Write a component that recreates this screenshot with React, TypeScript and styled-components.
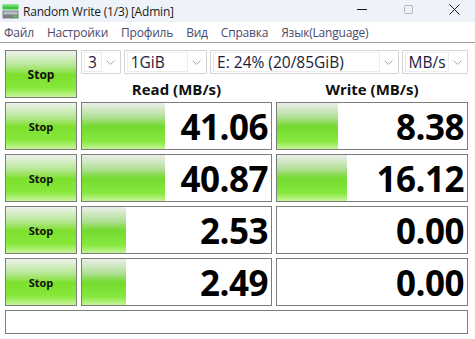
import React from 'react';
import styled, {createGlobalStyle} from 'styled-components';

const GlobalStyle = createGlobalStyle`
    html, body {
        margin: 0;
        padding: 0;
        background: #ffffff;
    }
    body {
        font-family: 'Open Sans', 'Noto Sans', sans-serif;
    }
`;

interface Result {
    read: string;
    readBar: number;
    write: string;
    writeBar: number;
}

const results: Result[] = [
    {read: '41.06', readBar: 83, write: '8.38', writeBar: 61},
    {read: '40.87', readBar: 83, write: '16.12', writeBar: 70},
    {read: '2.53', readBar: 44, write: '0.00', writeBar: 0},
    {read: '2.49', readBar: 44, write: '0.00', writeBar: 0},
];

const menuItems = ['Файл', 'Настройки', 'Профиль', 'Вид', 'Справка', 'Язык(Language)'];

const AppIcon = () => (
    <svg width="17" height="15" viewBox="0 0 17 15">
        <rect x="0.5" y="0.5" width="16" height="5" fill="#3cc83c" />
        <rect x="0.5" y="1" width="16" height="1.5" fill="#6fe06f" />
        <rect x="0.5" y="6.5" width="16" height="8" fill="#7a7f86" />
        <rect x="1.5" y="7.5" width="14" height="3" fill="#b9bec4" />
        <rect x="11" y="11.5" width="4" height="1.6" fill="#4fd24f" />
    </svg>
);

const Chevron = () => (
    <svg width="9" height="5" viewBox="0 0 9 5">
        <path d="M0.5 0.5 L4.5 4.5 L8.5 0.5" stroke="#a8a8a8" strokeWidth="1" fill="none" />
    </svg>
);

const WindowButtons = () => (
    <Controls>
        <svg width="11" height="11" viewBox="0 0 11 11">
            <path d="M0 5.5 H10" stroke="#1a1a1a" strokeWidth="1" />
        </svg>
        <svg width="11" height="11" viewBox="0 0 11 11">
            <rect x="1.5" y="1.5" width="8" height="8" rx="1" stroke="#b4b4b4" fill="none" />
        </svg>
        <svg width="11" height="11" viewBox="0 0 11 11">
            <path d="M0.5 0.5 L10.5 10.5 M10.5 0.5 L0.5 10.5" stroke="#1a1a1a" strokeWidth="1" />
        </svg>
    </Controls>
);

interface SelectProps {
    value: string;
    width: number;
}

const Select = ({value, width}: SelectProps) => (
    <SelectBox $width={width}>
        <SelectValue>{value}</SelectValue>
        <Chevron />
    </SelectBox>
);

const ScoreCell = ({value, bar}: {value: string; bar: number}) => (
    <Cell>
        {bar > 0 && <Bar style={{width: bar}} />}
        <Score>{value}</Score>
    </Cell>
);

const App = () => {
    return (
        <Window>
            <GlobalStyle />
            <TitleBar>
                <TitleLeft>
                    <AppIcon />
                    <Title>Random Write (1/3) [Admin]</Title>
                </TitleLeft>
                <WindowButtons />
            </TitleBar>
            <MenuBar>
                {menuItems.map((item) => (
                    <MenuItem key={item}>{item}</MenuItem>
                ))}
            </MenuBar>
            <Main>
                <StopButton>Stop</StopButton>
                <Header>
                    <Selects>
                        <Select value="3" width={40} />
                        <Select value="1GiB" width={84} />
                        <Select value="E: 24% (20/85GiB)" width={190} />
                        <Select value="MB/s" width={67} />
                    </Selects>
                    <Labels>
                        <ColumnLabel>Read (MB/s)</ColumnLabel>
                        <ColumnLabel>Write (MB/s)</ColumnLabel>
                    </Labels>
                </Header>
                {results.map((r, i) => (
                    <React.Fragment key={i}>
                        <StopButton $small>Stop</StopButton>
                        <ScoreCell value={r.read} bar={r.readBar} />
                        <ScoreCell value={r.write} bar={r.writeBar} />
                    </React.Fragment>
                ))}
                <StatusBar />
            </Main>
        </Window>
    );
};

const Window = styled.div`
    width: 475px;
    height: 339px;
    background: #ffffff;
    overflow: hidden;
`;

const TitleBar = styled.div`
    height: 22px;
    display: flex;
    align-items: center;
    justify-content: space-between;
    background: #eef3f9;
`;

const TitleLeft = styled.div`
    display: flex;
    align-items: center;
    gap: 4px;
    padding-left: 2px;
`;

const Title = styled.span`
    font-size: 12px;
    color: #1a1a1a;
    letter-spacing: -0.2px;
`;

const Controls = styled.div`
    display: flex;
    align-items: center;
    gap: 35px;
    padding-right: 15px;
    margin-top: -4px;
`;

const MenuBar = styled.div`
    height: 20px;
    display: flex;
    align-items: center;
    gap: 13px;
    padding-left: 4px;
    border-bottom: 1px solid #a0a0a0;
`;

const MenuItem = styled.span`
    font-size: 12px;
    color: #4a4a6a;
    letter-spacing: -0.2px;
`;

const Main = styled.div`
    display: grid;
    grid-template-columns: 72px 191px 192px;
    grid-auto-rows: 48px;
    column-gap: 4px;
    row-gap: 4px;
    padding: 7px 0 0 5px;
`;

const StopButton = styled.div<{$small?: boolean}>`
    box-sizing: border-box;
    border: 1px solid #7c7c7c;
    background: linear-gradient(
        to bottom,
        #eef2ec 0%,
        #b8e898 30%,
        #7ee02c 52%,
        #86e83a 80%,
        #c8f49a 100%
    );
    display: flex;
    align-items: center;
    justify-content: center;
    font-size: ${(p) => (p.$small ? 11 : 12)}px;
    font-weight: 700;
    color: #101010;
`;

const Header = styled.div`
    grid-column: 2 / 4;
    display: flex;
    flex-direction: column;
`;

const Selects = styled.div`
    display: flex;
    gap: 3px;
    height: 24px;
`;

const SelectBox = styled.div<{$width: number}>`
    box-sizing: border-box;
    width: ${(p) => p.$width}px;
    border: 1px solid #d4d4d4;
    border-radius: 1px;
    display: flex;
    align-items: center;
    justify-content: space-between;
    padding: 1px 5px 1px 2px;
    gap: 4px;
`;

const SelectValue = styled.span`
    flex: 1;
    height: 100%;
    box-sizing: border-box;
    border: 1px solid #ececec;
    display: flex;
    align-items: center;
    padding-left: 3px;
    font-size: 15.5px;
    line-height: 18px;
    color: #1c1c3c;
    white-space: nowrap;
`;

const Labels = styled.div`
    flex: 1;
    display: grid;
    grid-template-columns: 191px 192px;
    column-gap: 4px;
    align-items: center;
`;

const ColumnLabel = styled.div`
    text-align: center;
    font-size: 15px;
    font-weight: 700;
    color: #101010;
    padding-top: 5px;
`;

const Cell = styled.div`
    position: relative;
    box-sizing: border-box;
    border: 1px solid #7c7c7c;
    background: #ffffff;
    display: flex;
    align-items: center;
    justify-content: flex-end;
    overflow: hidden;
`;

const Bar = styled.div`
    position: absolute;
    left: 0;
    top: 0;
    bottom: 0;
    background: linear-gradient(
        to bottom,
        #eaeeea 0%,
        #b4e09a 30%,
        #74da30 50%,
        #86e83c 82%,
        #c4f496 100%
    );
`;

const Score = styled.span`
    position: relative;
    font-size: 35px;
    font-weight: 700;
    color: #000000;
    padding-right: 3px;
    letter-spacing: -0.5px;
`;

const StatusBar = styled.div`
    grid-column: 1 / 4;
    height: 24px;
    box-sizing: border-box;
    border: 1px solid #7c7c7c;
`;

export default App;
